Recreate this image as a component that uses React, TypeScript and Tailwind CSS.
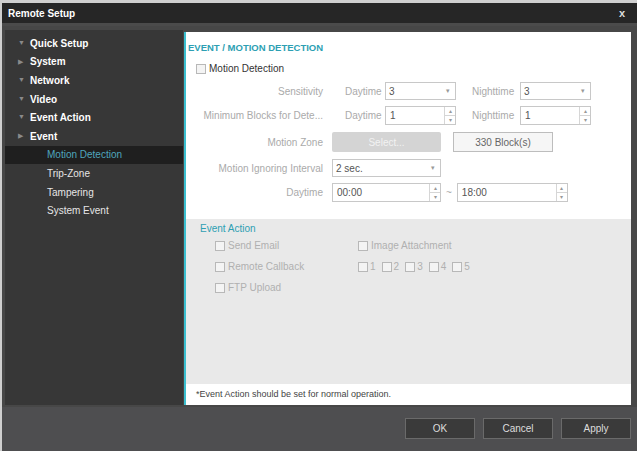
import React from "react";

const tree = [
  { label: "Quick Setup", open: true },
  { label: "System", open: false },
  { label: "Network", open: true },
  { label: "Video", open: true },
  { label: "Event Action", open: true },
  { label: "Event", open: false },
];

const subItems = ["Motion Detection", "Trip-Zone", "Tampering", "System Event"];

const Arrow = ({ open }: { open: boolean }) => (
  <span className="w-[10px] text-[7px] text-[#8a8a8a]">{open ? "▼" : "▶"}</span>
);

const Check = () => (
  <span className="inline-block w-[10px] h-[10px] border border-[#b8b8b8] bg-[#f4f4f4]" />
);

const Select = ({ value, w }: { value: string; w: string }) => (
  <div className={`${w} h-[18px] border border-[#c8c8c8] bg-white flex items-center justify-between pl-[3px] pr-[5px]`}>
    <span className="text-[#555]">{value}</span>
    <span className="text-[7px] text-[#999]">▾</span>
  </div>
);

const Spin = ({ value, w }: { value: string; w: string }) => (
  <div className={`${w} h-[19px] border border-[#c8c8c8] bg-white flex items-stretch justify-between`}>
    <span className="pl-[4px] self-center text-[#555]">{value}</span>
    <div className="w-[11px] flex flex-col border-l border-[#d6d6d6] text-[6px] leading-none text-[#999]">
      <span className="flex-1 flex items-center justify-center border-b border-[#d6d6d6]">▴</span>
      <span className="flex-1 flex items-center justify-center">▾</span>
    </div>
  </div>
);

const App: React.FC = () => {
  return (
    <div
      className="w-[637px] h-[451px] flex flex-col bg-[#474747] border-t-[3px] border-l-[2px] border-[#cfcfcf] text-[10px]"
      style={{ fontFamily: '"Liberation Sans", Arial, sans-serif' }}
    >
      <div className="h-[23px] bg-[#262626] flex items-center justify-between px-[6px] border-b-[3px] border-[#4b4b4b]">
        <span className="font-bold text-white text-[10px]">Remote Setup</span>
        <span className="font-bold text-[#ddd] text-[11px] mr-[6px]">x</span>
      </div>

      <div className="flex-1 flex pt-[4px] pb-[2px] pl-[3px] pr-[6px] gap-[1px]">
        <div className="w-[178px] bg-[#373737] pt-[4px] flex flex-col">
          {tree.map((t) => (
            <div key={t.label} className="h-[18.6px] flex items-center pl-[13px]">
              <Arrow open={t.open} />
              <span className="font-bold text-white ml-[2px]">{t.label}</span>
            </div>
          ))}
          {subItems.map((s, i) => (
            <div
              key={s}
              className={`h-[18.6px] flex items-center pl-[42px] ${i === 0 ? "bg-[#1f1f1f] text-[#4fa6bd]" : "text-[#e6e6e6]"}`}
            >
              {s}
            </div>
          ))}
        </div>

        <div className="flex-1 mt-[2px] bg-white border-l-[2px] border-[#3bbfcf] flex flex-col">
          <div className="pl-[2px] pt-[9px] text-[#2d9fb3] font-bold text-[9.5px]">
            EVENT / MOTION DETECTION
          </div>
          <div className="flex items-center gap-[3px] pl-[10px] mt-[6px] text-[#333]">
            <Check />
            <span>Motion Detection</span>
          </div>

          <div className="flex flex-col mt-[3px] text-[#aaa]">
            <div className="h-[24px] flex items-center">
              <span className="w-[137px] text-right">Sensitivity</span>
              <span className="ml-[22px] w-[40px]">Daytime</span>
              <Select value="3" w="w-[71px]" />
              <span className="ml-[16px] w-[48px]">Nighttime</span>
              <Select value="3" w="w-[71px]" />
            </div>
            <div className="h-[24px] flex items-center">
              <span className="w-[137px] text-right">Minimum Blocks for Dete...</span>
              <span className="ml-[22px] w-[40px]">Daytime</span>
              <Spin value="1" w="w-[71px]" />
              <span className="ml-[16px] w-[48px]">Nighttime</span>
              <Spin value="1" w="w-[71px]" />
            </div>
            <div className="h-[30px] flex items-center">
              <span className="w-[137px] text-right">Motion Zone</span>
              <div className="ml-[9px] w-[109px] h-[20px] bg-[#d4d4d4] rounded-[2px] flex items-center justify-center text-[#f2f2f2]">
                Select...
              </div>
              <div className="ml-[12px] w-[100px] h-[20px] border border-[#bdbdbd] bg-[#f6f6f6] flex items-center justify-center text-[#666]">
                330 Block(s)
              </div>
            </div>
            <div className="h-[22px] flex items-center">
              <span className="w-[137px] text-right">Motion Ignoring Interval</span>
              <div className="ml-[9px]">
                <Select value="2 sec." w="w-[109px]" />
              </div>
            </div>
            <div className="h-[26px] flex items-center">
              <span className="w-[137px] text-right">Daytime</span>
              <div className="ml-[9px]">
                <Spin value="00:00" w="w-[109px]" />
              </div>
              <span className="mx-[5px]">~</span>
              <Spin value="18:00" w="w-[111px]" />
            </div>
          </div>

          <div className="mt-[14px] h-[165px] bg-[#e9e9e9] pl-[14px] pt-[4px] text-[#b0b0b0]">
            <div className="text-[#2d9fb3] text-[10px] leading-[12px]">Event Action</div>
            <div className="grid grid-cols-[143px_1fr] pl-[15px]">
              <div className="h-[21px] flex items-center gap-[3px]"><Check />Send Email</div>
              <div className="h-[21px] flex items-center gap-[3px]"><Check />Image Attachment</div>
              <div className="h-[21px] flex items-center gap-[3px]"><Check />Remote Callback</div>
              <div className="h-[21px] flex items-center gap-[6px]">
                {["1", "2", "3", "4", "5"].map((n) => (
                  <span key={n} className="flex items-center gap-[2px]"><Check />{n}</span>
                ))}
              </div>
              <div className="h-[21px] flex items-center gap-[3px]"><Check />FTP Upload</div>
            </div>
          </div>

          <div className="flex-1 flex items-center pl-[10px] text-[9px] text-[#444]">
            *Event Action should be set for normal operation.
          </div>
        </div>
      </div>

      <div className="h-[44px] bg-[#4e4e50] flex items-center justify-end gap-[8px] pr-[6px] pb-[2px]">
        {["OK", "Cancel", "Apply"].map((b) => (
          <div
            key={b}
            className="w-[70px] h-[21px] bg-[#3a3a3a] border border-[#6a6a6a] flex items-center justify-center text-[#ddd]"
          >
            {b}
          </div>
        ))}
      </div>
    </div>
  );
};

export default App;
